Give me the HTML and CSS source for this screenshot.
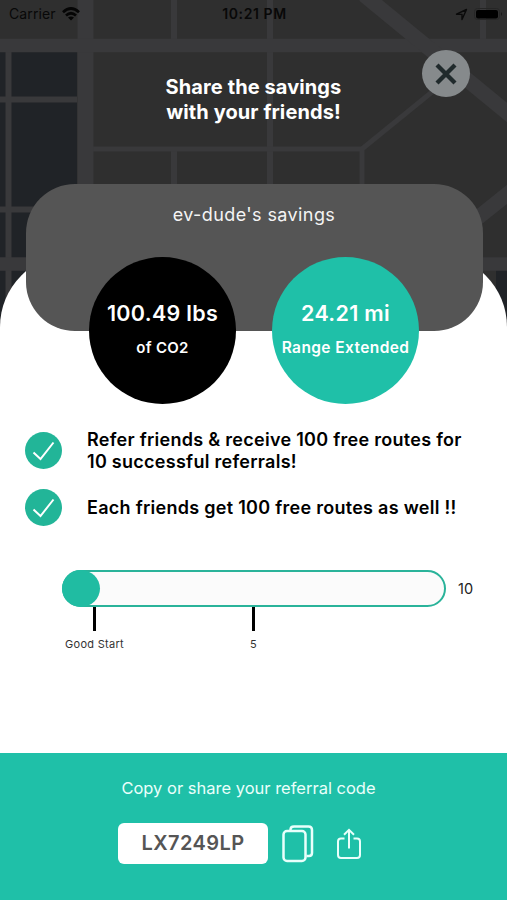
FILE: index.html
```
<!DOCTYPE html>
<html>
<head>
	<meta charset="utf-8">
	<meta name="viewport" content="width=device-width, initial-scale=1">
	<title>Share the savings</title>
	<link rel="stylesheet" href="styles.css">
</head>
<body>
<div id="screen">
	<!-- street map behind the header -->
	<svg class="map" width="507" height="340" viewBox="0 0 507 340">
		<rect width="507" height="340" fill="#2f2f2f"/>
		<rect y="45" width="77" height="295" fill="#202327"/>
		<rect x="496" y="264" width="11" height="76" fill="#202327"/>
		<g fill="none" stroke="#39393b" stroke-width="6">
			<path d="M8.500 45V340M0 99.500H77M0 209.500H77M174 0V45M174 149V340M270 0V340M483 0V45"/>
			<path d="M93 149H362L432 92M362 149V340" stroke-width="5"/>
			<path d="M85.500 0V340" stroke-width="16"/>
			<path d="M0 45.500H507M0 264H507" stroke-width="13.500"/>
			<path d="M364 -5L515 119M470 224L515 188" stroke-width="15"/>
		</g>
	</svg>

	<div class="status">
		<div class="carrier">
			<span>Carrier</span>
			<svg width="18" height="14" viewBox="0 0 18 14" fill="none" stroke="#050505" stroke-width="2.700">
				<path d="M1 5.200Q9 -2.200 17 5.200"/>
				<path d="M4 8.500Q9 4 14 8.500"/>
				<path d="M9 13.500L6 10.600Q9 8.200 12 10.600Z" fill="#050505" stroke="none"/>
			</svg>
		</div>
		<div class="time">10:21 PM</div>
		<div class="battery">
			<svg width="13" height="13" viewBox="0 0 13 13" fill="none" stroke="#0a0a0a" stroke-width="1.400" stroke-linejoin="round">
				<path d="M1.500 6.200L11.500 1.500L7 11.500V6.400Z"/>
			</svg>
			<svg width="29" height="14" viewBox="0 0 29 14">
				<rect x="0.500" y="1.500" width="25" height="11" rx="3" fill="none" stroke="#262626"/>
				<rect x="2" y="3" width="22" height="8.500" rx="2" fill="#000"/>
				<path d="M27 5Q29 7 27 9Z" fill="#191919"/>
			</svg>
		</div>
	</div>

	<div class="header">
		<h1>Share the savings<br>with your friends!</h1>
		<button type="button" class="close">
			<svg width="22" height="22" viewBox="0 0 22 22" stroke="#202a2c" stroke-width="4.300">
				<path d="M2 2L20 20M20 2L2 20"/>
			</svg>
		</button>
	</div>

	<div class="sheet">
		<div class="card">
			<p class="owner">ev-dude's savings</p>
			<div class="circles">
				<div class="circle black">
					<b>100.49 lbs</b>
					<span>of CO2</span>
				</div>
				<div class="circle green">
					<b>24.21 mi</b>
					<span class="range">Range Extended</span>
				</div>
			</div>
		</div>

		<ul class="perks">
			<li>
				<svg width="37" height="37" viewBox="0 0 37 37">
					<circle cx="18.500" cy="18.500" r="18.500" fill="#22b598"/>
					<path d="M8.500 20.500L15.500 27L28.500 10.500" fill="none" stroke="#fff" stroke-width="2"/>
				</svg>
				<p>Refer friends &amp; receive 100 free routes for<br>10 successful referrals!</p>
			</li>
			<li>
				<svg width="37" height="37" viewBox="0 0 37 37">
					<circle cx="18.500" cy="18.500" r="18.500" fill="#22b598"/>
					<path d="M8.500 20.500L15.500 27L28.500 10.500" fill="none" stroke="#fff" stroke-width="2"/>
				</svg>
				<p>Each friends get 100 free routes as well !!</p>
			</li>
		</ul>

		<div class="progress">
			<div class="bar"><div class="fill"></div></div>
			<span class="max">10</span>
		</div>
		<div class="ticks">
			<div class="tick">Good Start</div>
			<div class="tick">5</div>
		</div>
	</div>

	<div class="footer">
		<p>Copy or share your referral code</p>
		<div class="share">
			<div class="code">LX7249LP</div>
			<svg class="copyicon" width="32" height="38" viewBox="0 0 32 38" fill="none" stroke="#e9fffb" stroke-width="2.500">
				<rect x="1.500" y="6" width="22" height="30" rx="3.500"/>
				<path d="M8.500 5.500V4.500Q8.500 1.500 12 1.500H26.500Q30 1.500 30 5V28Q30 31 27 31H24.500"/>
			</svg>
			<svg width="26" height="32" viewBox="0 0 26 32" fill="none" stroke="#e9fffb" stroke-width="2">
				<path d="M8.500 10.500H5Q2 10.500 2 13.500V27Q2 30 5 30H21Q24 30 24 27V13.500Q24 10.500 21 10.500H17.500"/>
				<path d="M13 20.500V2M8 6.700L13 1.800L18 6.700"/>
			</svg>
		</div>
	</div>
</div>
</body>
</html>
```
FILE: styles.css
```
*
{
	box-sizing:border-box;
}
body
{
	margin:0;
	font-family:Inter, "Liberation Sans", sans-serif;
}
h1, p, ul
{
	margin:0;
	padding:0;
}
#screen
{
	position:relative;
	width:507px;
	height:900px;
	overflow:hidden;
	display:flex;
	flex-direction:column;
	background-color:#2f2f2f;
}
.map
{
	position:absolute;
	top:0;
	left:0;
}
.status
{
	position:relative;
	height:28px;
	padding:0 7px 0 9px;
	display:grid;
	grid-template-columns:1fr auto 1fr;
	align-items:center;
	color:#080808;
	font-size:14px;
	line-height:28px;
	letter-spacing:0.1px;
}
.carrier, .battery
{
	display:flex;
	align-items:center;
	gap:6px;
}
.battery
{
	justify-content:flex-end;
	margin-right:-3px;
}
.time
{
	font-weight:600;
	letter-spacing:0.6px;
}
.header
{
	position:relative;
	height:226px;
	padding-top:47px;
	text-align:center;
	color:white;
}
.header h1
{
	font-size:20px;
	font-weight:700;
	line-height:24.5px;
	letter-spacing:0.1px;
}
.close
{
	position:absolute;
	top:22px;
	left:422px;
	width:48px;
	height:47px;
	padding:0;
	display:flex;
	align-items:center;
	justify-content:center;
	background-color:#868a8c;
	border:none;
	border-radius:50%;
}
.sheet
{
	position:relative;
	flex:1;
	background-color:white;
	border-radius:73px 73px 0 0;
}
.card
{
	width:457px;
	height:147px;
	margin:-70px 0 0 25.5px;
	padding-top:19px;
	background-color:#555;
	border-radius:49px;
	color:#f4f4f4;
	text-align:center;
}
.owner
{
	font-size:18px;
	line-height:24px;
	letter-spacing:0.4px;
}
.circles
{
	display:flex;
	justify-content:center;
	gap:36px;
	margin-top:30px;
}
.circle
{
	width:147px;
	height:147px;
	padding-top:42px;
	border-radius:50%;
	color:white;
	white-space:nowrap;
}
.circle b, .circle span
{
	display:block;
}
.circle b
{
	font-size:21.5px;
	font-weight:600;
	line-height:28px;
	letter-spacing:0.3px;
}
.circle span
{
	margin-top:10px;
	font-size:15px;
	font-weight:600;
	line-height:22px;
	letter-spacing:0.3px;
}
.circle .range
{
	font-size:15.5px;
	letter-spacing:0.4px;
}
.black
{
	background-color:black;
}
.green
{
	background-color:#1fc0a8;
}
.perks
{
	margin:98px 0 0 25px;
	list-style:none;
}
.perks li
{
	display:flex;
	align-items:center;
	gap:25px;
	height:44px;
	margin-bottom:13px;
	font-size:18px;
	font-weight:600;
	line-height:22px;
	letter-spacing:0.28px;
	white-space:nowrap;
}
.perks svg
{
	margin-bottom:2px;
}
.progress
{
	display:flex;
	align-items:center;
	gap:12px;
	margin:40px 0 0 62px;
	font-size:14.5px;
	color:#222;
}
.bar
{
	width:384px;
	height:37px;
	border:2px solid #2ab39a;
	border-radius:19px;
	background-color:#fbfbfb;
}
.fill
{
	width:38px;
	height:37px;
	margin:-2px;
	background-color:#20bca2;
	border-radius:50%;
}
.ticks
{
	display:flex;
	margin-left:15px;
}
.tick
{
	width:159px;
	font-size:11px;
	line-height:16px;
	letter-spacing:0.3px;
	text-align:center;
	color:#333;
}
.tick::before
{
	content:"";
	display:block;
	width:3px;
	height:24px;
	margin:0 auto 5px;
	background-color:black;
}
.footer
{
	position:relative;
	height:147px;
	padding-top:23px;
	background-color:#1fc0a8;
	color:#eafffb;
	text-align:center;
	font-size:16.5px;
	line-height:24px;
}
.footer p
{
	padding-right:10px;
}
.share
{
	display:flex;
	align-items:center;
	margin:23px 0 0 118px;
}
.code
{
	width:150px;
	height:41px;
	background-color:white;
	border-radius:6px;
	color:#555;
	font-size:20px;
	font-weight:600;
	line-height:41px;
	letter-spacing:0.4px;
}
.copyicon
{
	margin:0 22px 0 14px;
}
```
